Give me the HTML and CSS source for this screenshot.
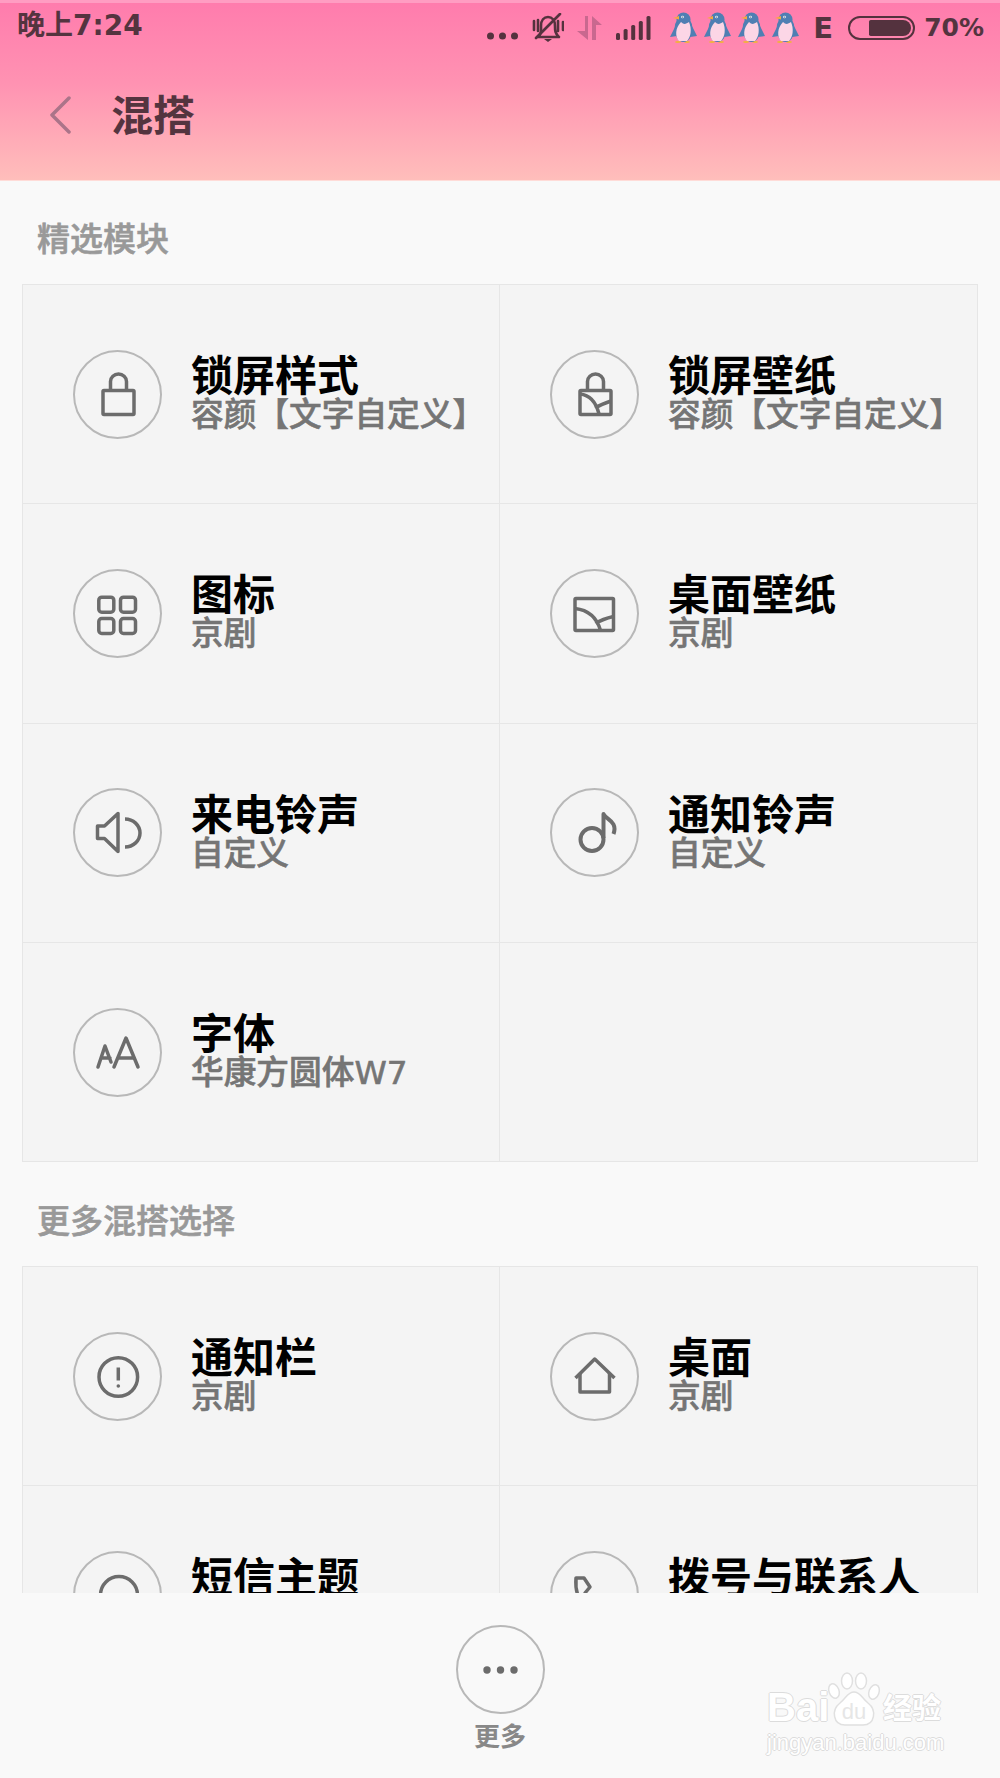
FILE: index.html
```html
<!DOCTYPE html>
<html lang="zh-CN">
<head>
<meta charset="utf-8">
<title>混搭</title>
<link rel="stylesheet" href="styles.css">
</head>
<body>
<svg class="defs" width="0" height="0" aria-hidden="true">
  <symbol id="penguin" viewBox="0 0 27 31">
    <ellipse cx="8" cy="30" rx="3" ry="1" fill="#f2b23e"/>
    <ellipse cx="17" cy="30" rx="3" ry="1" fill="#f2b23e"/>
    <polygon points="6,13 0,25 7,24" fill="#4f7fb3"/>
    <polygon points="21,12 27,24 20,25" fill="#4f7fb3"/>
    <ellipse cx="13.5" cy="17" rx="9" ry="13" fill="#4f7fb3"/>
    <circle cx="13.5" cy="7.500" r="7" fill="#4f7fb3"/>
    <path d="M11 10 C14 13 16 12 19 10 C22 17 21 25 17 29 H9 C5 25 5 16 11 10Z" fill="#fcd6e6"/>
    <polygon points="3,6 9,4 9,7.500" fill="#f5a742"/>
    <circle cx="12.500" cy="5" r="1.300" fill="#fff"/>
    <circle cx="12.500" cy="5" r=".6" fill="#23395a"/>
  </symbol>
</svg>
<div class="app">
  <header class="top">
    <div class="status">
      <span class="time">晚上7:24</span>
      <div class="status-icons">
        <svg class="st-dots" viewBox="0 0 31 29"><circle cx="3.500" cy="23" r="3.500"/><circle cx="15.500" cy="23" r="3.500"/><circle cx="27.500" cy="23" r="3.500"/></svg>
        <svg class="st-bell" viewBox="0 0 32 29"><g class="st-line"><path d="M6 24 C10 21 9 17 9 13 C9 7 12 4 16 4 C20 4 23 7 23 13 C23 17 23 21 27 24 Z"/><path d="M2 8 V17 M6 7 V18"/><path d="M26 8 V18 M31 9 V17"/><path d="M4 25 L28 1"/></g><path class="st-fill" d="M12 26 H20 L16 29Z"/></svg>
        <svg class="st-arrows" viewBox="0 0 26 26"><polygon points="8,1 11,1 11,25 0,16 8,16"/><polygon points="15,1 25,10 19,10 19,25 15,25"/></svg>
        <svg class="st-signal" viewBox="0 0 35 24"><rect x="0" y="17" width="4" height="7" rx="1.500"/><rect x="7.600" y="13" width="4" height="11" rx="1.500"/><rect x="15.200" y="9" width="4" height="15" rx="1.500"/><rect x="22.800" y="5" width="4" height="19" rx="1.500"/><rect x="30.500" y="0" width="4" height="24" rx="1.500"/></svg>
        <div class="penguins">
          <svg class="st-penguin"><use href="#penguin"/></svg>
          <svg class="st-penguin"><use href="#penguin"/></svg>
          <svg class="st-penguin"><use href="#penguin"/></svg>
          <svg class="st-penguin"><use href="#penguin"/></svg>
        </div>
        <span class="st-net">E</span>
        <div class="battery"><div class="battery-fill"></div></div>
        <span class="st-pct">70%</span>
      </div>
    </div>
    <div class="titlebar">
      <svg class="back" viewBox="0 0 22 38"><path d="M20 2 L3 19 L20 36"/></svg>
      <h1 class="title">混搭</h1>
    </div>
  </header>

  <main>
    <h2 class="section-label">精选模块</h2>
    <section class="grid">
      <div class="cell">
        <svg class="badge" viewBox="0 0 89 89"><circle class="ring" cx="44.500" cy="44.500" r="43.500"/><g class="glyph"><rect x="30" y="40.500" width="31" height="24" rx="1"/><path d="M37.500 40 V31.500 a8 7.500 0 0 1 16 0 V40"/></g></svg>
        <div class="text"><div class="name">锁屏样式</div><div class="sub">容颜【文字自定义】</div></div>
      </div>
      <div class="cell">
        <svg class="badge" viewBox="0 0 89 89"><circle class="ring" cx="44.500" cy="44.500" r="43.500"/><g class="glyph"><rect x="30" y="40.500" width="31" height="24" rx="1"/><path d="M37.500 40 V31.500 a8 7.500 0 0 1 16 0 V40"/><path d="M30 44 C40 45 46 52 49 64 M45 58 C50 55 55 53 61 51"/></g></svg>
        <div class="text"><div class="name">锁屏壁纸</div><div class="sub">容颜【文字自定义】</div></div>
      </div>
      <div class="cell">
        <svg class="badge" viewBox="0 0 89 89"><circle class="ring" cx="44.500" cy="44.500" r="43.500"/><g class="glyph"><rect x="25.800" y="28.200" width="15" height="15" rx="3"/><rect x="47.500" y="28.200" width="15" height="15" rx="3"/><rect x="25.800" y="49.500" width="15" height="15" rx="3"/><rect x="47.500" y="49.500" width="15" height="15" rx="3"/></g></svg>
        <div class="text"><div class="name">图标</div><div class="sub">京剧</div></div>
      </div>
      <div class="cell">
        <svg class="badge" viewBox="0 0 89 89"><circle class="ring" cx="44.500" cy="44.500" r="43.500"/><g class="glyph"><rect x="25" y="29.500" width="38.500" height="32" rx="1"/><path d="M25 39.500 C38 41 47 49 50.500 61.500 M45.500 54.500 C51 51 57 49 63.500 47.500"/></g></svg>
        <div class="text"><div class="name">桌面壁纸</div><div class="sub">京剧</div></div>
      </div>
      <div class="cell">
        <svg class="badge" viewBox="0 0 89 89"><circle class="ring" cx="44.500" cy="44.500" r="43.500"/><g class="glyph"><path d="M24.500 38 H31.500 L45 25.500 V63.500 L31.500 50.500 H24.500 Z"/><path d="M52 31 A15 14 0 0 1 52 59"/></g></svg>
        <div class="text"><div class="name">来电铃声</div><div class="sub">自定义</div></div>
      </div>
      <div class="cell">
        <svg class="badge" viewBox="0 0 89 89"><circle class="ring" cx="44.500" cy="44.500" r="43.500"/><g class="glyph glyph-bold"><circle cx="42" cy="51.500" r="11.500"/><path d="M53.500 50 V26 C56 32 68 33 63.500 46"/></g></svg>
        <div class="text"><div class="name">通知铃声</div><div class="sub">自定义</div></div>
      </div>
      <div class="cell">
        <svg class="badge" viewBox="0 0 89 89"><circle class="ring" cx="44.500" cy="44.500" r="43.500"/><g class="glyph glyph-round"><path d="M41 59 L53 30 L65 59 M45 50 H61"/><path d="M25 59 L32 38 L38 54 M28 50 H37"/></g></svg>
        <div class="text"><div class="name">字体</div><div class="sub">华康方圆体W7</div></div>
      </div>
      <div class="cell"></div>
    </section>

    <h2 class="section-label">更多混搭选择</h2>
    <section class="grid">
      <div class="cell">
        <svg class="badge" viewBox="0 0 89 89"><circle class="ring" cx="44.500" cy="44.500" r="43.500"/><g class="glyph"><circle cx="45.300" cy="45" r="19.300"/><path d="M45.300 35.500 V48.500"/></g><circle class="dot" cx="45.300" cy="54" r="1.800"/></svg>
        <div class="text"><div class="name">通知栏</div><div class="sub">京剧</div></div>
      </div>
      <div class="cell">
        <svg class="badge" viewBox="0 0 89 89"><circle class="ring" cx="44.500" cy="44.500" r="43.500"/><g class="glyph"><path d="M25.500 46 L44.700 27 L64.500 46"/><path d="M30 41 V60 H59.500 V41"/></g></svg>
        <div class="text"><div class="name">桌面</div><div class="sub">京剧</div></div>
      </div>
      <div class="cell">
        <svg class="badge" viewBox="0 0 89 89"><circle class="ring" cx="44.500" cy="44.500" r="43.500"/><g class="glyph"><circle cx="46" cy="44" r="18.500"/></g></svg>
        <div class="text"><div class="name">短信主题</div><div class="sub">京剧</div></div>
      </div>
      <div class="cell">
        <svg class="badge" viewBox="0 0 89 89"><circle class="ring" cx="44.500" cy="44.500" r="43.500"/><g class="glyph"><path d="M26 27 h8 l6 9 -5 6 c2 8 7 13 14 17 l5 -5 10 5 v8 c-24 2 -40 -16 -38 -40z"/></g></svg>
        <div class="text"><div class="name">拨号与联系人</div><div class="sub">京剧</div></div>
      </div>
    </section>
  </main>

  <footer class="bottom">
    <div class="more">
      <svg class="more-badge" viewBox="0 0 89 89"><circle class="ring" cx="44.500" cy="44.500" r="43.500"/><circle class="dot" cx="31" cy="45" r="3.700"/><circle class="dot" cx="44.500" cy="45" r="3.700"/><circle class="dot" cx="58" cy="45" r="3.700"/></svg>
      <span class="more-label">更多</span>
    </div>
    <div class="watermark">
      <div class="wm-row">
        <span class="wm-bai">Bai</span>
        <svg class="wm-paw" viewBox="0 0 54 55">
          <ellipse cx="7" cy="19" rx="5" ry="7.500" transform="rotate(-20 7 19)"/>
          <ellipse cx="20" cy="9" rx="5.500" ry="8"/>
          <ellipse cx="34" cy="9" rx="5.500" ry="8"/>
          <ellipse cx="47" cy="20" rx="5" ry="7.500" transform="rotate(20 47 20)"/>
          <path d="M27 20 C33 20 35 26 41 31 C50 38 48 53 36 53 H18 C6 53 4 38 13 31 C19 26 21 20 27 20Z"/>
          <text x="27" y="47" text-anchor="middle">du</text>
        </svg>
        <span class="wm-cn">经验</span>
      </div>
      <div class="wm-url">jingyan.baidu.com</div>
    </div>
  </footer>
</div>
</body>
</html>
```
FILE: styles.css
```css
* { box-sizing: border-box; }
html, body { margin: 0; padding: 0; }
body {
  width: 1000px;
  height: 1778px;
  overflow: hidden;
  background: #f9f9f9;
  font-family: "DejaVu Sans", "Noto Sans CJK SC", sans-serif;
}
.defs { display: block; height: 0; }
.app { position: relative; width: 1000px; height: 1778px; overflow: hidden; }

/* header */
.top {
  height: 181px;
  border-top: 3px solid #ff9dc2;
  border-bottom: 1px solid #ffdcd8;
  background: linear-gradient(#ff7cad, #ff92b2 45%, #ffbebb);
  color: #54343f;
}
.status {
  height: 49px;
  display: flex;
  justify-content: space-between;
  align-items: center;
  padding: 0 16px 0 17px;
}
.time { font-size: 28px; font-weight: 700; line-height: 34px; margin-top: -4px; }
.status-icons { display: flex; align-items: center; }
.status-icons svg { display: block; fill: #54323e; }
.st-dots { width: 31px; height: 29px; margin-right: 14px; }
.st-bell { width: 32px; height: 29px; margin-right: 13px; }
.st-line { fill: none; stroke: #54323e; stroke-width: 2.600; stroke-linecap: round; stroke-linejoin: round; }
.status-icons .st-arrows { width: 26px; height: 26px; margin-right: 13px; fill: #c9688f; }
.st-signal { width: 35px; height: 24px; margin-right: 19px; }
.penguins { display: flex; gap: 7px; margin-right: 14px; }
.st-penguin { width: 27px; height: 31px; }
.st-net { font-size: 29px; font-weight: 700; line-height: 30px; margin-right: 13px; width: 22px; }
.battery {
  width: 67px;
  height: 24px;
  border: 2px solid #54323e;
  border-radius: 12px;
  padding: 2px;
  display: flex;
  justify-content: flex-end;
  margin-right: 9px;
}
.battery-fill { width: 42px; background: #54323e; border-radius: 2px 9px 9px 2px; }
.st-pct { font-size: 25px; font-weight: 700; line-height: 30px; }

.titlebar {
  display: flex;
  align-items: center;
  height: 128px;
  padding: 0 0 0 49px;
}
.back { width: 22px; height: 38px; margin-right: 40px; margin-top: -2px; }
.back path { fill: none; stroke: #ab7489; stroke-width: 3.500; stroke-linecap: round; stroke-linejoin: round; }
.title { margin: 2px 0 0; font-size: 42px; font-weight: 700; line-height: 50px; }

/* sections */
.section-label {
  margin: 0;
  height: 103px;
  padding: 9px 0 0 37px;
  display: flex;
  align-items: center;
  font-size: 33px;
  font-weight: 500;
  color: #999;
  -webkit-text-stroke: 0.6px #999;
}
.grid + .section-label { height: 104px; }
.grid {
  margin: 0 22px;
  display: grid;
  grid-template-columns: 477px 1fr;
  grid-auto-rows: 219.300px;
  border-top: 1px solid #e6e6e6;
  border-left: 1px solid #e6e6e6;
  background: #f4f4f4;
}
.cell {
  display: flex;
  align-items: center;
  padding-left: 50px;
  border-right: 1px solid #e6e6e6;
  border-bottom: 1px solid #e6e6e6;
}
.badge { width: 89px; height: 89px; flex: none; margin-right: 29px; }
.ring { fill: none; stroke: #b8b8b8; stroke-width: 2; }
.glyph { fill: none; stroke: #6c6c6c; stroke-width: 3.500; stroke-linejoin: round; }
.glyph-bold { stroke-width: 4; }
.glyph-round { stroke-linecap: round; }
.dot { fill: #6c6c6c; }
.text { display: flex; flex-direction: column; }
.name { font-size: 42px; font-weight: 700; line-height: 42px; color: #000; white-space: nowrap; }
.sub { font-size: 32.700px; font-weight: 500; line-height: 34px; color: #757575; white-space: nowrap; -webkit-text-stroke: 0.6px #757575; }

/* bottom bar */
.bottom {
  position: absolute;
  left: 0;
  right: 0;
  bottom: 0;
  height: 185px;
  background: #f9f9f9;
  display: flex;
  justify-content: center;
  padding-top: 32px;
}
.more { display: flex; flex-direction: column; align-items: center; }
.more-badge { width: 89px; height: 89px; display: block; }
.more-label { margin-top: 6px; font-size: 26px; font-weight: 700; line-height: 34px; color: #888; }

.watermark { position: absolute; left: 767px; top: 78px; width: 180px; color: #fff; }
.wm-row { display: flex; align-items: flex-end; height: 56px; }
.wm-bai, .wm-cn, .wm-url {
  text-shadow: 1px 0 0 #dcdcdc, -1px 0 0 #dcdcdc, 0 1px 0 #dcdcdc, 0 -1px 0 #dcdcdc;
}
.wm-bai { font-family: "Liberation Sans", sans-serif; font-size: 40px; font-weight: 700; line-height: 40px; margin-right: 6px; width: 54px; }
.wm-paw { width: 54px; height: 55px; flex: none; }
.wm-paw ellipse, .wm-paw path { fill: #fff; stroke: #e0e0e0; stroke-width: 1.500; }
.wm-paw text { font-family: "Liberation Sans", sans-serif; font-size: 22px; fill: #e6e6e6; }
.wm-cn { font-size: 29px; font-weight: 700; line-height: 36px; white-space: nowrap; margin-left: 2px; }
.wm-url { font-family: "Liberation Sans", sans-serif; font-size: 22px; line-height: 26px; margin-top: 3px; white-space: nowrap; }
```
